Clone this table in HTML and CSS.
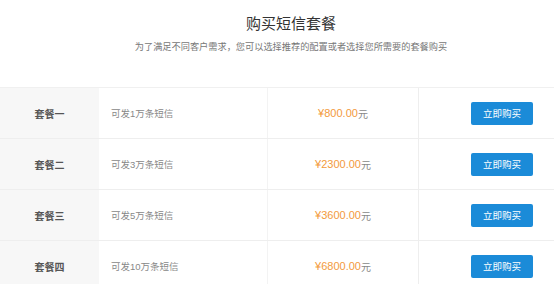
FILE: index.html
```html
<!DOCTYPE html>
<html lang="zh">
<head>
<meta charset="utf-8">
<link rel="stylesheet" href="styles.css">
</head>
<body>
<div class="page">
  <div class="header">
    <h1 class="title">购买短信套餐</h1>
    <p class="subtitle">为了满足不同客户需求，您可以选择推荐的配置或者选择您所需要的套餐购买</p>
  </div>
  <div class="table">
    <div class="row">
      <div class="cell name">套餐一</div>
      <div class="cell desc">可发1万条短信</div>
      <div class="cell price"><span class="amount">¥800.00</span><span class="unit">元</span></div>
      <div class="cell action"><button class="buy">立即购买</button></div>
    </div>
    <div class="row">
      <div class="cell name">套餐二</div>
      <div class="cell desc">可发3万条短信</div>
      <div class="cell price"><span class="amount">¥2300.00</span><span class="unit">元</span></div>
      <div class="cell action"><button class="buy">立即购买</button></div>
    </div>
    <div class="row">
      <div class="cell name">套餐三</div>
      <div class="cell desc">可发5万条短信</div>
      <div class="cell price"><span class="amount">¥3600.00</span><span class="unit">元</span></div>
      <div class="cell action"><button class="buy">立即购买</button></div>
    </div>
    <div class="row">
      <div class="cell name">套餐四</div>
      <div class="cell desc">可发10万条短信</div>
      <div class="cell price"><span class="amount">¥6800.00</span><span class="unit">元</span></div>
      <div class="cell action"><button class="buy">立即购买</button></div>
    </div>
  </div>
</div>
</body>
</html>
```
FILE: styles.css
```css
* { box-sizing: border-box; }
html, body { margin: 0; padding: 0; background: #fff; }
body {
  font-family: "Liberation Sans", "Noto Sans CJK SC", sans-serif;
  color: #333;
}
.page { width: 554px; }
.header {
  height: 87px;
  padding-left: 28px;
  text-align: center;
  padding-top: 13px;
}
.title {
  margin: 0;
  font-size: 15px;
  line-height: 22px;
  font-weight: normal;
  color: #333;
}
.subtitle {
  margin: 5px 0 0;
  font-size: 9.2px;
  line-height: 14px;
  color: #777;
}
.table { border-top: 1px solid #f0f0f0; }
.row {
  display: grid;
  grid-template-columns: 99px 169px 151px 1fr;
  height: 51px;
  border-bottom: 1px solid #eee;
}
.cell {
  display: flex;
  align-items: center;
  font-size: 9.5px;
}
.name {
  background: #f7f7f7;
  justify-content: center;
  font-size: 10px;
  font-weight: bold;
  color: #555;
}
.desc {
  padding-left: 12px;
  color: #888;
  border-right: 1px solid #f3f3f3;
}
.price {
  justify-content: center;
  border-right: 1px solid #eee;
}
.amount { color: #f39a3c; font-size: 11px; }
.unit { color: #888; font-size: 10px; }
.action {
  justify-content: flex-end;
  padding-right: 21px;
}
.buy {
  width: 62px;
  height: 23px;
  border: none;
  border-radius: 2px;
  background: #1b8bd8;
  color: #fff;
  font-family: "Noto Sans CJK SC", sans-serif;
  font-size: 9.5px;
  padding: 0;
  cursor: pointer;
}
```
